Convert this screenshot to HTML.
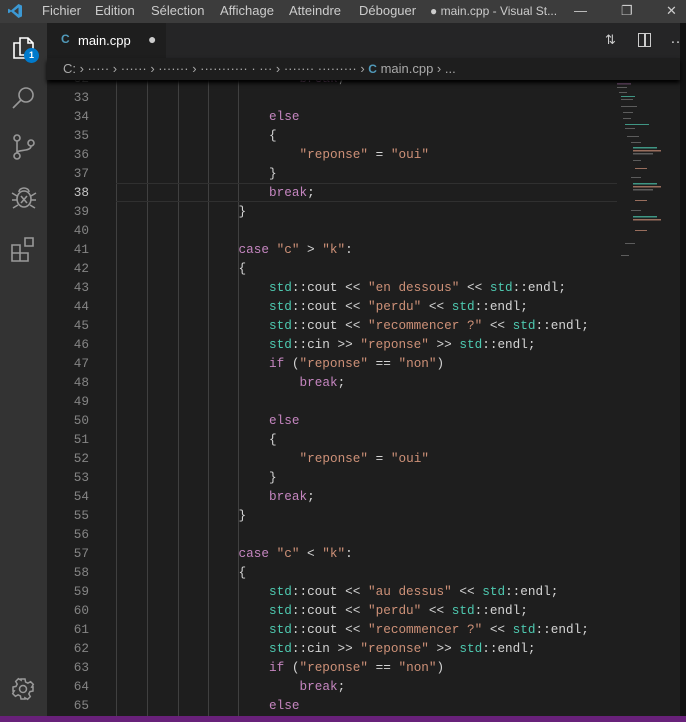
<!DOCTYPE html>
<html><head><meta charset="utf-8"><style>
*{margin:0;padding:0;box-sizing:border-box}
body{width:686px;height:722px;overflow:hidden;background:#1e1e1e;font-family:"Liberation Sans",sans-serif;position:relative}
#title{position:absolute;left:0;top:0;width:686px;height:23px;background:#3c3c3c;color:#ccc;font-size:13px}
#title span{position:absolute;top:3px}
#act{position:absolute;left:0;top:23px;width:47px;height:693px;background:#333}
#tabs{position:absolute;left:47px;top:23px;width:639px;height:35px;background:#252526}
#tab{position:absolute;left:0;top:0;width:119px;height:35px;background:#1e1e1e;color:#fff;font-size:13px}
#crumb{position:absolute;left:47px;top:58px;width:633px;height:22px;background:#1e1e1e;color:#a9a9a9;font-size:13px;box-shadow:0 3px 4px #000;z-index:3}
#code{position:absolute;left:47px;top:69px;width:570px;height:647px;overflow:hidden;font-family:"Liberation Mono",monospace;font-size:12.7px}
.l{height:19px;line-height:19px;position:relative;white-space:pre;color:#d4d4d4}
.n{position:absolute;left:0;width:42px;text-align:right;color:#858585}
.t{position:absolute;left:39px}
.k{color:#c586c0}.s{color:#ce9178}.d{color:#4ec9b0}
.g{position:absolute;top:0;width:1px;height:100%;background:#404040}
#status{position:absolute;left:0;top:716px;width:686px;height:6px;background:#68217a}
#mini{position:absolute;left:617px;top:80px;width:60px;height:636px}
#sb{position:absolute;left:680px;top:23px;width:6px;height:693px;background:#111}
</style></head><body>
<div id="title">
<svg style="position:absolute;left:7px;top:3px" width="16" height="16" viewBox="0 0 16 16"><path d="M11.5 1 L15 2.6 V13.4 L11.5 15 L4 8.5 L1.8 10.2 L1 9.6 V6.4 L1.8 5.8 L4 7.5 Z M11.5 4.5 L7 8 L11.5 11.5 Z" fill="#3c99d4"/></svg>
<span style="left:42px">Fichier</span><span style="left:95px">Edition</span><span style="left:151px">Sélection</span><span style="left:220px">Affichage</span><span style="left:289px">Atteindre</span><span style="left:359px">Déboguer</span><span style="left:430px;font-size:12px;top:4px">● main.cpp - Visual St...</span>
<span style="left:574px">—</span><span style="left:621px">❐</span><span style="left:666px">✕</span>
</div>
<div id="act">
<svg style="position:absolute;left:11px;top:12px" width="26" height="26" viewBox="0 0 26 26" fill="none" stroke="#fff" stroke-width="1.6"><path d="M9 3h8l5 5v12H9z M17 3v5h5 M9 8H3v15h13v-3"/></svg>
<div style="position:absolute;left:24px;top:25px;width:15px;height:15px;border-radius:50%;background:#007acc;color:#fff;font-size:9px;font-weight:bold;text-align:center;line-height:15px">1</div>
<svg style="position:absolute;left:11px;top:62px" width="26" height="26" viewBox="0 0 26 26" fill="none" stroke="#999" stroke-width="1.6"><circle cx="15" cy="10" r="7"/><path d="M10 15l-8 8"/></svg>
<svg style="position:absolute;left:11px;top:110px" width="26" height="28" viewBox="0 0 26 28" fill="none" stroke="#999" stroke-width="1.6"><circle cx="6" cy="5" r="3"/><circle cx="6" cy="23" r="3"/><circle cx="20" cy="10" r="3"/><path d="M6 8v12 M20 13c0 6-14 3-14 7"/></svg>
<svg style="position:absolute;left:10px;top:160px" width="28" height="28" viewBox="0 0 28 28" fill="none" stroke="#999" stroke-width="1.6"><ellipse cx="14" cy="16" rx="7" ry="8"/><path d="M9 9a5 4 0 0 1 10 0 M2 10l5 3 M26 10l-5 3 M2 17h5 M26 17h-5 M3 25l5-3 M25 25l-5-3 M11 13l6 7 M17 13l-6 7"/></svg>
<svg style="position:absolute;left:10px;top:212px" width="28" height="28" viewBox="0 0 28 28" fill="none" stroke="#999" stroke-width="1.6"><path d="M2 10h8v8H2z M10 18h8v8h-8z M2 18h8v8H2z M15 3h8v8h-8z"/></svg>
<svg style="position:absolute;left:11px;top:654px" width="24" height="24" viewBox="0 0 24 24" fill="none" stroke="#999" stroke-width="1.5"><circle cx="12" cy="12" r="3.5"/><path d="M10 2h4l.6 3 2.3 1.2 2.7-1.5 2.7 2.7-1.5 2.7L22 10v4l-3 .6-1.2 2.3 1.5 2.7-2.7 2.7-2.7-1.5L14 22h-4l-.6-3-2.3-1.2-2.7 1.5-2.7-2.7 1.5-2.7L2 14v-4l3-.6 1.2-2.3-1.5-2.7 2.7-2.7 2.7 1.5z"/></svg>
</div>
<div id="tabs"><div id="tab"><span style="position:absolute;left:14px;top:9px;color:#519aba;font-weight:bold;font-size:12px">C</span><span style="position:absolute;left:31px;top:10px">main.cpp</span><span style="position:absolute;left:101px;top:8px;color:#ccc;font-size:14px">●</span></div>
<span style="position:absolute;left:558px;top:9px;color:#ccc;font-size:13px">⇅</span><span style="position:absolute;left:591px;top:10px;width:13px;height:14px;border:1.5px solid #ccc"></span><span style="position:absolute;left:597px;top:10px;width:1.5px;height:14px;background:#ccc"></span><span style="position:absolute;left:623px;top:7px;color:#ccc">…</span></div>
<div id="crumb"><span style="position:absolute;left:16px;top:3px">C: ›  ····· › ······ › ······· › ··········· · ··· › ······· ·········  › <b style="color:#519aba;font-size:12px">C</b> main.cpp › ...</span></div>
<div id="code">
<div style="position:absolute;left:69px;top:0;width:1px;height:100%;background:#404040"></div>
<div style="position:absolute;left:100px;top:0;width:1px;height:100%;background:#404040"></div>
<div style="position:absolute;left:131px;top:0;width:1px;height:100%;background:#404040"></div>
<div style="position:absolute;left:161px;top:0;width:1px;height:100%;background:#404040"></div>
<div style="position:absolute;left:191px;top:0;width:1px;height:100%;background:#404040"></div>
<div style="position:absolute;left:69px;top:114px;width:501px;height:19px;border-top:1px solid #303030;border-bottom:1px solid #303030"></div>
<div id="lines"></div>
</div>
<div id="mini">
<svg width="60" height="180" viewBox="0 0 60 180"><g fill="#777" opacity=".7">
<rect x="0" y="3" width="14" height="1.5" fill="#a070a0"/><rect x="0" y="7" width="10" height="1"/><rect x="2" y="12" width="8" height="1"/><rect x="4" y="16" width="14" height="1" fill="#4ec9b0"/><rect x="4" y="19" width="12" height="1"/><rect x="4" y="26" width="16" height="1"/><rect x="6" y="32" width="10" height="1"/><rect x="6" y="38" width="8" height="1"/><rect x="8" y="44" width="24" height="1" fill="#4ec9b0"/><rect x="8" y="48" width="10" height="1"/><rect x="10" y="56" width="12" height="1"/><rect x="14" y="62" width="10" height="1"/><rect x="16" y="67" width="24" height="1.5" fill="#4ec9b0"/><rect x="16" y="70" width="28" height="1.5" fill="#ce9178"/><rect x="16" y="73" width="20" height="1.5"/><rect x="16" y="80" width="8" height="1"/><rect x="18" y="88" width="12" height="1" fill="#ce9178"/><rect x="14" y="97" width="10" height="1"/><rect x="16" y="103" width="24" height="1.5" fill="#4ec9b0"/><rect x="16" y="106" width="28" height="1.5" fill="#ce9178"/><rect x="16" y="109" width="20" height="1.5"/><rect x="18" y="120" width="12" height="1" fill="#ce9178"/><rect x="14" y="130" width="10" height="1"/><rect x="16" y="136" width="24" height="1.5" fill="#4ec9b0"/><rect x="16" y="139" width="28" height="1.5" fill="#ce9178"/><rect x="18" y="150" width="12" height="1" fill="#ce9178"/><rect x="8" y="163" width="10" height="1"/><rect x="4" y="175" width="8" height="1"/></g></svg>
</div>
<div id="sb"></div>
<div id="status"></div>
<script>
var L=[[32,7,'<span class="k">break</span>;'],[33,0,''],[34,6,'<span class="k">else</span>'],[35,6,'{'],[36,7,'<span class="s">"reponse"</span> = <span class="s">"oui"</span>'],[37,6,'}'],[38,6,'<span class="k">break</span>;'],[39,5,'}'],[40,0,''],[41,5,'<span class="k">case</span> <span class="s">"c"</span> &gt; <span class="s">"k"</span>:'],[42,5,'{']];
function blk(a,b){return [[0,6,'<span class="d">std</span>::cout &lt;&lt; <span class="s">"'+a+'"</span> &lt;&lt; <span class="d">std</span>::endl;'],[0,6,'<span class="d">std</span>::cout &lt;&lt; <span class="s">"perdu"</span> &lt;&lt; <span class="d">std</span>::endl;'],[0,6,'<span class="d">std</span>::cout &lt;&lt; <span class="s">"recommencer ?"</span> &lt;&lt; <span class="d">std</span>::endl;'],[0,6,'<span class="d">std</span>::cin &gt;&gt; <span class="s">"reponse"</span> &gt;&gt; <span class="d">std</span>::endl;'],[0,6,'<span class="k">if</span> (<span class="s">"reponse"</span> == <span class="s">"non"</span>)'],[0,7,'<span class="k">break</span>;']]}
var b1=blk('en dessous');b1=b1.concat([[0,0,''],[0,6,'<span class="k">else</span>'],[0,6,'{'],[0,7,'<span class="s">"reponse"</span> = <span class="s">"oui"</span>'],[0,6,'}'],[0,6,'<span class="k">break</span>;'],[0,5,'}'],[0,0,''],[0,5,'<span class="k">case</span> <span class="s">"c"</span> &lt; <span class="s">"k"</span>:'],[0,5,'{']]);
b1=b1.concat(blk('au dessus'));b1.push([0,6,'<span class="k">else</span>']);
L=L.concat(b1);var h='';
L.forEach(function(r,i){var n=32+i;h+='<div class="l"><span class="n" style="'+(n==38?'color:#c6c6c6':'')+'">'+n+'</span><span class="t" style="left:'+(39+r[1]*30.5)+'px">'+r[2]+'</span></div>';});
document.getElementById('lines').innerHTML=h;
</script>
</body></html>
